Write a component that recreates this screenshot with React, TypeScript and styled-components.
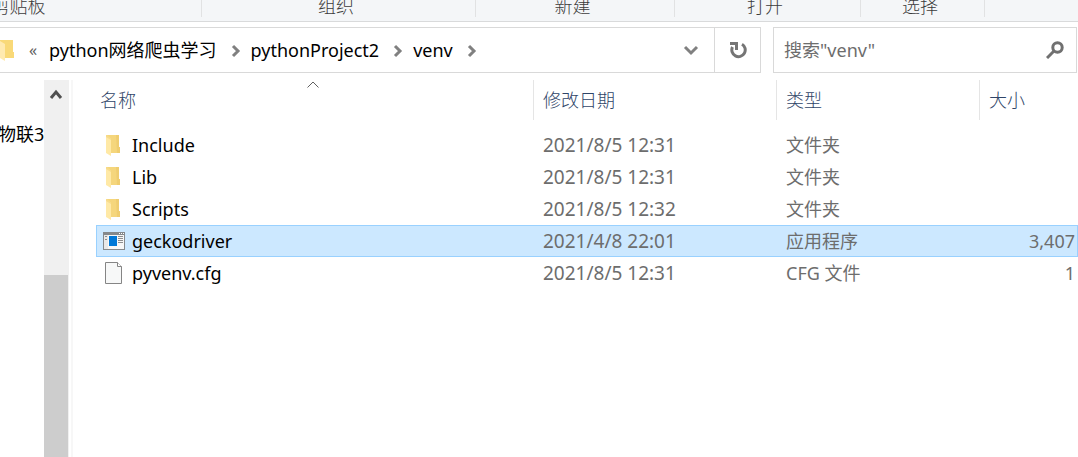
import React from "react";
import styled, { createGlobalStyle, css } from "styled-components";

const GlobalStyle = createGlobalStyle`
  * { box-sizing: border-box; }
  body {
    margin: 0;
    background: #ffffff;
    color: #000000;
    font-family: "Noto Sans", "Noto Sans CJK SC", sans-serif;
    font-size: 18px;
    line-height: 24px;
    overflow: hidden;
  }
  button, input {
    font: inherit;
    color: inherit;
    border: 0;
    padding: 0;
    background: none;
  }
`;

const Window = styled.div`
  display: flex;
  flex-direction: column;
  height: 100vh;
`;

const Ribbon = styled.header`
  display: flex;
  flex: none;
  height: 22px;
  padding-bottom: 4px;
  overflow: hidden;
  background: #f4f6f8;
  border-bottom: 1px solid #d9dadb;
`;

const RibbonGroup = styled.section<{ $width: number; $cut?: number }>`
  display: flex;
  flex: none;
  align-items: flex-end;
  justify-content: center;
  width: ${(p) => p.$width}px;
  margin-left: ${(p) => -(p.$cut ?? 0)}px;
  padding-right: 5px;
  border-right: 1px solid #e1e2e3;
  color: #3c3c3c;
  font-family: "Noto Sans CJK SC", sans-serif;
  font-weight: 300;
`;

const Toolbar = styled.nav`
  display: flex;
  flex: none;
  gap: 12px;
  height: 58px;
  padding: 5px 1px 7px 0;
`;

const AddressBar = styled.div`
  display: flex;
  flex: 1;
  min-width: 0;
  border: 1px solid #d9d9d9;
  border-left: 0;
`;

const Crumbs = styled.div`
  display: flex;
  flex: 1;
  align-items: center;
  min-width: 0;
  overflow: hidden;
  white-space: nowrap;
`;

const Crumb = styled.button`
  flex: none;
`;

const IconButton = styled.button<{ $width: number; $divided?: boolean }>`
  display: flex;
  flex: none;
  align-items: center;
  justify-content: center;
  width: ${(p) => p.$width}px;
  ${(p) =>
    p.$divided &&
    css`
      border-left: 1px solid #d9d9d9;
    `}
`;

const CrumbGap = styled.span`
  display: flex;
  flex: none;
  justify-content: center;
  width: 34px;
  padding: 1px 0 0 4px;
`;

const SearchBox = styled.label`
  display: flex;
  flex: none;
  align-items: center;
  width: 304px;
  padding: 0 12px 0 10px;
  border: 1px solid #d9d9d9;
`;

const SearchInput = styled.input`
  flex: 1;
  min-width: 0;
  outline: 0;
  &::placeholder {
    color: #6d6d6d;
    opacity: 1;
  }
`;

const Body = styled.div`
  display: flex;
  flex: 1;
  min-height: 0;
`;

const Tree = styled.aside`
  flex: none;
  width: 44px;
  padding-top: 42px;
  overflow: hidden;
`;

const TreeItem = styled.button`
  display: block;
  margin-left: -2px;
  white-space: nowrap;
`;

const Scrollbar = styled.div`
  display: flex;
  flex: none;
  flex-direction: column;
  width: 25px;
  padding-right: 1px;
  background: #f0f0f0;
`;

const ScrollGap = styled.div`
  flex: 170;
`;

const ScrollThumb = styled.div`
  flex: 182;
  background: #cdcdcd;
`;

const Files = styled.main`
  flex: 1;
  min-width: 0;
  margin-left: 2px;
  padding-left: 23px;
  border-left: 2px solid #f7f7f7;
`;

const FileTable = styled.table`
  width: 100%;
  table-layout: fixed;
  border-collapse: separate;
  border-spacing: 0;
`;

const Column = styled.col<{ $width?: number }>`
  width: ${(p) => (p.$width ? `${p.$width}px` : "auto")};
`;

const HeadCell = styled.th`
  padding: 0 0 9px;
  font-weight: 300;
  text-align: left;
  &:last-child button {
    border-right: 0;
  }
  &:first-child button {
    padding-left: 4px;
  }
`;

const HeadButton = styled.button`
  position: relative;
  display: block;
  width: 100%;
  height: 40px;
  padding: 0 0 2px 9px;
  border-right: 1px solid #e5e5e5;
  color: #2f4568;
  font-family: "Noto Sans CJK SC", sans-serif;
  text-align: left;
`;

const SortMark = styled.svg`
  position: absolute;
  top: 1px;
  left: calc(50% - 9px);
`;

const FileRow = styled.tr<{ $selected: boolean }>`
  height: 32px;
  ${(p) =>
    p.$selected &&
    css`
      background: #cce8ff;
      outline: 1px solid #99d1ff;
      outline-offset: -1px;
    `}
`;

const Cell = styled.td<{ $right?: boolean }>`
  padding: 0 ${(p) => (p.$right ? 3 : 0)}px 0 9px;
  color: #6d6d6d;
  font-weight: 400;
  text-align: ${(p) => (p.$right ? "right" : "left")};
  white-space: nowrap;
`;

const DateCell = styled(Cell)`
  font-size: 19px;
`;

const NameCell = styled(Cell)`
  padding: 0;
  color: #000000;
`;

const FileName = styled.div`
  display: grid;
  grid-template-columns: 36px 1fr;
  align-items: center;
  & > svg {
    justify-self: center;
  }
`;

const FolderIcon = () => (
  <svg width="24" height="24" viewBox="0 0 24 24" aria-hidden="true">
    <path d="M4 2h13v12h1v6H8z" fill="#f5d67c" />
    <path d="M14 2h3v12h1v6h-3z" fill="#efcd70" />
    <path d="M4 2l5 4v17l-5-3z" fill="#ffe9a6" />
    <path d="M4 2h1l4 4v1L4 4z" fill="#f7db8c" />
  </svg>
);

const AppIcon = () => (
  <svg width="22" height="18" viewBox="0 0 22 18" aria-hidden="true">
    <path d="M0 0h22v18H0z" fill="#85898c" />
    <path d="M1 3h20v14H1z" fill="#f7f7f7" />
    <path d="M1 3h4v14H1z" fill="#e8e8e8" />
    <path d="M16 1h1v1h-1zM18 1h1v1h-1zM20 1h1v1h-1z" fill="#fff" />
    <path d="M6 4h8v10H6z" fill="#0078d7" />
    <path d="M2 4.500h2M2 7.500h2M15 4.500h5M15 6.500h5M15 8.500h5M15 10.500h5" stroke="#8e8e8e" />
  </svg>
);

const DocIcon = () => (
  <svg width="18" height="22" viewBox="0 0 18 22" aria-hidden="true">
    <path d="M.5.5h12l4 4v17H.5z" fill="#f7f8f8" stroke="#858585" />
    <path d="M12.500.5v4h4" fill="#fff" stroke="#858585" />
  </svg>
);

const CrumbChevron = () => (
  <CrumbGap aria-hidden="true">
    <svg width="10" height="14" viewBox="0 0 10 14">
      <path d="M2 2l5 5-5 5" fill="none" stroke="#808080" strokeWidth="3" />
    </svg>
  </CrumbGap>
);

const AddressFolder = styled.svg`
  flex: none;
  width: 29px;
  height: 22px;
`;

const MoreCrumbs = styled(Crumb)`
  width: 20px;
  color: #606060;
  font-size: 16px;
  text-align: left;
`;

type Kind = "folder" | "app" | "doc";

const icons: Record<Kind, React.ReactNode> = {
  folder: <FolderIcon />,
  app: <AppIcon />,
  doc: <DocIcon />,
};

const files: { name: string; kind: Kind; date: string; type: string; size: string }[] = [
  { name: "Include", kind: "folder", date: "2021/8/5 12:31", type: "文件夹", size: "" },
  { name: "Lib", kind: "folder", date: "2021/8/5 12:31", type: "文件夹", size: "" },
  { name: "Scripts", kind: "folder", date: "2021/8/5 12:32", type: "文件夹", size: "" },
  { name: "geckodriver", kind: "app", date: "2021/4/8 22:01", type: "应用程序", size: "3,407" },
  { name: "pyvenv.cfg", kind: "doc", date: "2021/8/5 12:31", type: "CFG 文件", size: "1" },
];

const crumbs = ["python网络爬虫学习", "pythonProject2", "venv"];

export default function App() {
  return (
    <Window>
      <GlobalStyle />
      <Ribbon>
        <RibbonGroup $width={361} $cut={159}>剪贴板</RibbonGroup>
        <RibbonGroup $width={274}>组织</RibbonGroup>
        <RibbonGroup $width={199}>新建</RibbonGroup>
        <RibbonGroup $width={186}>打开</RibbonGroup>
        <RibbonGroup $width={124}>选择</RibbonGroup>
      </Ribbon>

      <Toolbar>
        <AddressBar>
          <Crumbs>
            <AddressFolder viewBox="0 0 29 22" aria-hidden="true">
              <path d="M0 1h13v12h1v6H0z" fill="#f9d978" />
              <path d="M0 2l5 3v17l-5-3z" fill="#ffeab0" />
            </AddressFolder>
            <MoreCrumbs aria-label="更多">«</MoreCrumbs>
            {crumbs.map((name) => (
              <React.Fragment key={name}>
                <Crumb>{name}</Crumb>
                <CrumbChevron />
              </React.Fragment>
            ))}
          </Crumbs>
          <IconButton $width={46} aria-label="以前的位置">
            <svg width="16" height="12" viewBox="0 0 16 12">
              <path d="M2 3l6 6 6-6" fill="none" stroke="#808080" strokeWidth="3" />
            </svg>
          </IconButton>
          <IconButton $width={46} $divided aria-label="刷新">
            <svg width="18" height="18" viewBox="0 0 18 18">
              <path d="M13 3.200A6.700 6.700 0 1 1 3.500 6" fill="none" stroke="#757575" strokeWidth="3" />
              <path d="M1 1h8v8H6V4H1z" fill="#757575" />
            </svg>
          </IconButton>
        </AddressBar>
        <SearchBox>
          <SearchInput type="text" placeholder={'搜索"venv"'} aria-label="搜索" />
          <svg width="18" height="18" viewBox="0 0 18 18" aria-hidden="true">
            <circle cx="11.500" cy="6.500" r="4.700" fill="none" stroke="#707070" strokeWidth="3" />
            <path d="M8 10l-7 7" stroke="#707070" strokeWidth="3" />
          </svg>
        </SearchBox>
      </Toolbar>

      <Body>
        <Tree>
          <TreeItem>物联3</TreeItem>
        </Tree>
        <Scrollbar>
          <IconButton $width={24} aria-label="向上滚动">
            <svg width="14" height="25" viewBox="0 0 14 25">
              <path d="M2 18l5-6 5 6" fill="none" stroke="#505050" strokeWidth="3" />
            </svg>
          </IconButton>
          <ScrollGap />
          <ScrollThumb />
        </Scrollbar>
        <Files>
          <FileTable>
            <colgroup>
              <Column $width={438} />
              <Column $width={243} />
              <Column $width={203} />
              <Column />
            </colgroup>
            <thead>
              <tr>
                <HeadCell scope="col" aria-sort="ascending">
                  <HeadButton>
                    名称
                    <SortMark width="14" height="8" viewBox="0 0 14 8" aria-hidden="true">
                      <path d="M1.500 6.500L7 1l5.500 5.500" fill="none" stroke="#606060" />
                    </SortMark>
                  </HeadButton>
                </HeadCell>
                <HeadCell scope="col"><HeadButton>修改日期</HeadButton></HeadCell>
                <HeadCell scope="col"><HeadButton>类型</HeadButton></HeadCell>
                <HeadCell scope="col"><HeadButton>大小</HeadButton></HeadCell>
              </tr>
            </thead>
            <tbody>
              {files.map((f) => (
                <FileRow key={f.name} $selected={f.kind === "app"}>
                  <NameCell>
                    <FileName>
                      {icons[f.kind]}
                      <span>{f.name}</span>
                    </FileName>
                  </NameCell>
                  <DateCell>{f.date}</DateCell>
                  <Cell>{f.type}</Cell>
                  <Cell $right>{f.size}</Cell>
                </FileRow>
              ))}
            </tbody>
          </FileTable>
        </Files>
      </Body>
    </Window>
  );
}
